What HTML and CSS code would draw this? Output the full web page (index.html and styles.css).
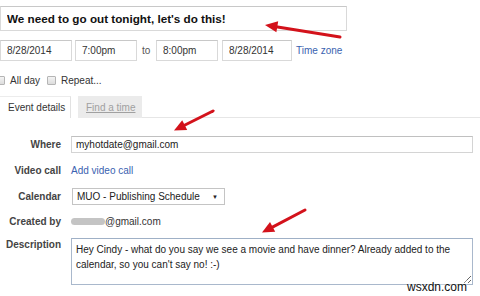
FILE: index.html
```
<!DOCTYPE html>
<html>
<head>
<meta charset="utf-8">
<link rel="stylesheet" href="styles.css">
</head>
<body>
<div class="page">
  <input class="title" type="text" value="We need to go out tonight, let's do this!">
  <div class="daterow">
    <input class="box d1" type="text" value="8/28/2014">
    <input class="box t1" type="text" value="7:00pm">
    <span class="to">to</span>
    <input class="box t2" type="text" value="8:00pm">
    <input class="box d2" type="text" value="8/28/2014">
    <a class="link tz">Time zone</a>
  </div>
  <div class="checkrow">
    <span class="cb first"></span><span class="cblabel">All day</span>
    <span class="cb"></span><span class="cblabel">Repeat...</span>
  </div>
  <div class="tabs">
    <div class="tab active">Event details</div>
    <div class="tab inactive"><span>Find a time</span></div>
    <div class="tabfill"></div>
  </div>
  <div class="form">
    <div class="row r-where"><label class="lbl">Where</label><input class="field" type="text" value="myhotdate@gmail.com"></div>
    <div class="row r-video"><label class="lbl">Video call</label><a class="link">Add video call</a></div>
    <div class="row r-cal"><label class="lbl">Calendar</label><div class="select"><span>MUO - Publishing Schedule</span><span class="caret">&#9660;</span></div></div>
    <div class="row r-created"><label class="lbl">Created by</label><span class="blur"></span><span class="val">@gmail.com</span></div>
    <div class="row r-desc"><label class="lbl">Description</label><textarea class="desc">Hey Cindy - what do you say we see a movie and have dinner? Already added to the calendar, so you can't say no! :-)</textarea></div>
  </div>
  <div class="watermark">wsxdn.com</div>
  <svg class="arrows" width="480" height="296" viewBox="0 0 480 296">
    <g fill="#d3121b" stroke="#d3121b" stroke-linecap="round">
      <line x1="340" y1="37" x2="276" y2="26.8" stroke-width="3"/>
      <polygon points="265,25 278.2,21.2 276.4,32.2" stroke="none"/>
      <line x1="213" y1="111" x2="184" y2="125.5" stroke-width="3"/>
      <polygon points="174,130.5 182.2,120.2 187.2,130" stroke="none"/>
      <line x1="305" y1="210" x2="272" y2="227.3" stroke-width="3"/>
      <polygon points="262,232.5 270,222 275.2,231.8" stroke="none"/>
    </g>
  </svg>
</div>
</body>
</html>
```
FILE: styles.css
```
html, body {
  margin: 0;
  padding: 0;
  background: #fff;
}
.page {
  position: relative;
  width: 480px;
  height: 296px;
  overflow: hidden;
  font-family: "Liberation Sans", Arial, sans-serif;
  font-size: 10px;
  color: #333;
}
input, textarea {
  font-family: "Liberation Sans", Arial, sans-serif;
  margin: 0;
  box-sizing: border-box;
  outline: none;
  color: #222;
}
.title {
  display: block;
  margin-top: 6px;
  width: 347px;
  height: 25px;
  border: 1px solid #d9d9d9;
  border-top-color: #c8c8c8;
  padding: 0 0 0 6px;
  font-size: 11.7px;
  font-weight: bold;
  color: #111;
}
.daterow {
  display: flex;
  align-items: center;
  margin-top: 9px;
  height: 21px;
}
.box {
  height: 21px;
  border: 1px solid #d9d9d9;
  border-top-color: #c8c8c8;
  padding: 0 0 0 6px;
  font-size: 10px;
  color: #333;
}
.d1 { width: 72px; }
.t1 { width: 62px; margin-left: 3px; }
.to { margin-left: 5px; margin-right: 0; width: 10px; color: #555; }
.t2 { width: 62px; margin-left: 4px; }
.d2 { width: 70px; margin-left: 4px; }
.link {
  color: #3a62b0;
  font-size: 10px;
}
.tz { margin-left: 4px; }
.checkrow {
  display: flex;
  align-items: center;
  margin-top: 13px;
  height: 12px;
}
.cb {
  width: 7px;
  height: 7px;
  border: 1px solid #b5b5b5;
  border-radius: 1px;
  background: linear-gradient(#f4f4f4, #dcdcdc);
  margin-left: 7px;
}
.cb.first { margin-left: -4px; }
.cblabel {
  margin-left: 5px;
  font-size: 10px;
  color: #333;
}
.tabs {
  display: flex;
  margin-top: 10px;
  height: 22px;
}
.tab {
  box-sizing: border-box;
  height: 22px;
  display: flex;
  align-items: center;
  font-size: 10px;
}
.tab.active {
  width: 71px;
  padding-left: 8px;
  background: #fff;
  border-top: 1px solid #ececec;
  border-right: 1px solid #e2e2e2;
  color: #333;
}
.tab.inactive {
  width: 64px;
  margin-left: 7px;
  background: #ebebeb;
  padding-left: 8px;
  color: #a0a0a0;
}
.tab.inactive span { text-decoration: underline; }
.tabfill {
  flex: 1;
  border-bottom: 1px solid #e6e6e6;
}
.form {
  margin-top: 18px;
}
.row {
  display: flex;
  align-items: center;
  height: 17px;
}
.lbl {
  width: 61px;
  margin-right: 10px;
  text-align: right;
  font-weight: bold;
  font-size: 10px;
  color: #444;
  flex: none;
}
.r-video { margin-top: 9px; }
.r-cal { margin-top: 9px; }
.r-created { margin-top: 8px; }
.r-desc {
  margin-top: 8px;
  align-items: flex-start;
  height: auto;
}
.r-desc .lbl { margin-top: 1px; }
.field {
  width: 402px;
  height: 17px;
  border: 1px solid #d4d4d4;
  border-top-color: #c0c0c0;
  padding: 0 0 0 4px;
  font-size: 10px;
  color: #222;
}
.select {
  box-sizing: border-box;
  width: 153px;
  height: 17px;
  margin-left: 1px;
  border: 1px solid #c4c4c4;
  display: flex;
  align-items: center;
  justify-content: space-between;
  padding: 0 6px 0 4px;
  font-size: 10px;
  color: #222;
  background: #fff;
}
.caret { font-size: 6px; color: #222; }
.blur {
  width: 34px;
  height: 7px;
  border-radius: 4px;
  background: #c4c4c4;
  margin-right: 0;
}
.val { font-size: 10px; color: #333; }
.desc {
  width: 402px;
  height: 47px;
  border: 1px solid #a9b8cc;
  border-top-color: #9fb0c6;
  padding: 3px 4px;
  font-size: 10px;
  line-height: 15px;
  color: #222;
  resize: both;
  overflow: hidden;
}
.watermark {
  position: absolute;
  left: 407px;
  top: 280px;
  font-size: 12px;
  line-height: 14px;
  color: #111;
  background: rgba(255,255,255,0.3);
}
.arrows {
  position: absolute;
  left: 0;
  top: 0;
  pointer-events: none;
}
```
